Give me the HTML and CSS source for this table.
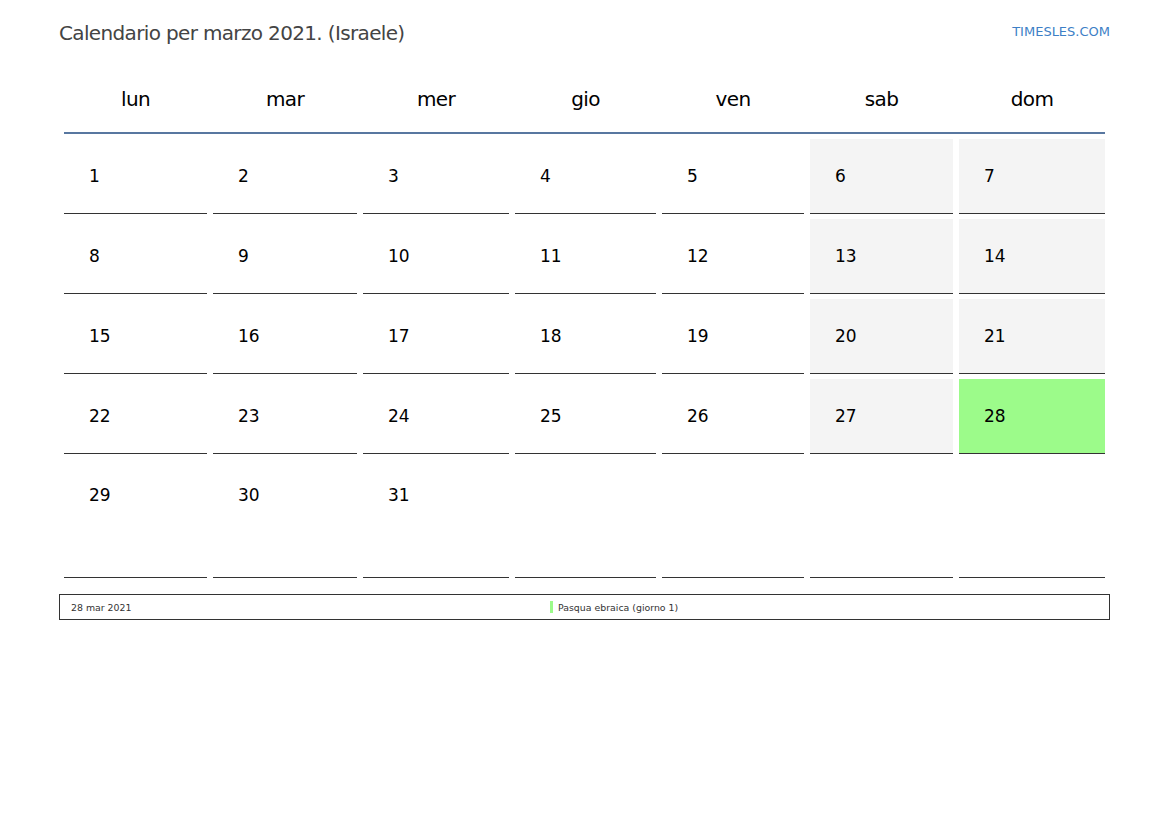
FILE: index.html
```html
<!DOCTYPE html>
<html lang="it">
<head>
<meta charset="utf-8">
<title>Calendario marzo 2021</title>
<link rel="stylesheet" href="styles.css">
</head>
<body>
<div class="page">
  <header class="top">
    <h1 class="title">Calendario per marzo 2021. (Israele)</h1>
    <a class="brand">TIMESLES.COM</a>
  </header>
  <div class="cal">
    <div class="head">
      <div class="hd">lun</div><div class="hd">mar</div><div class="hd">mer</div><div class="hd">gio</div><div class="hd">ven</div><div class="hd">sab</div><div class="hd">dom</div>
    </div>
    <div class="grid">
      <div class="c">1</div><div class="c">2</div><div class="c">3</div><div class="c">4</div><div class="c">5</div><div class="c we">6</div><div class="c we">7</div>
      <div class="c">8</div><div class="c">9</div><div class="c">10</div><div class="c">11</div><div class="c">12</div><div class="c we">13</div><div class="c we">14</div>
      <div class="c">15</div><div class="c">16</div><div class="c">17</div><div class="c">18</div><div class="c">19</div><div class="c we">20</div><div class="c we">21</div>
      <div class="c">22</div><div class="c">23</div><div class="c">24</div><div class="c">25</div><div class="c">26</div><div class="c we">27</div><div class="c hol">28</div>
      <div class="c last">29</div><div class="c last">30</div><div class="c last">31</div><div class="c last"></div><div class="c last"></div><div class="c last"></div><div class="c last"></div>
    </div>
  </div>
  <div class="legend">
    <div class="ldate">28 mar 2021</div>
    <div class="lname"><span class="mark"></span>Pasqua ebraica (giorno 1)</div>
  </div>
</div>
</body>
</html>
```
FILE: styles.css
```css
html, body { margin: 0; padding: 0; background: #fff; }
body { font-family: "DejaVu Sans", sans-serif; color: #000; }
.page { width: 1169px; height: 827px; box-sizing: border-box; padding: 21px 59px 0 59px; }
.top { display: flex; justify-content: space-between; align-items: flex-start; height: 58px; }
.title { margin: 0; font-weight: normal; font-size: 20px; line-height: 24px; color: #444; letter-spacing: -0.65px; }
.brand { font-size: 13px; line-height: 16px; color: #3d7fc6; margin-top: 3px; text-decoration: none; }
.cal { margin: 0 5px; }
.head, .grid { display: grid; grid-template-columns: 143px 144px 146px 141px 142px 143px 146px; column-gap: 6px; }
.head { border-bottom: 2px solid #5877a0; }
.hd { text-align: center; font-size: 20px; line-height: 24px; padding: 8px 0 21px; letter-spacing: -0.6px; }
.grid { row-gap: 5px; margin-top: 5px; }
.c { height: 74px; box-sizing: content-box; border-bottom: 1px solid #333; padding-left: 25px; font-size: 17px; line-height: 74px; }
.c.we { background: #f4f4f4; }
.c.hol { background: #9cfb8a; }
.c.last { height: 118px; line-height: 72px; }
.legend { display: flex; margin-top: 16px; height: 24px; border: 1px solid #333; font-size: 9.4px; color: #333; align-items: center; }
.ldate { width: 479px; padding-left: 11px; flex: none; }
.lname { display: flex; align-items: center; }
.mark { display: inline-block; width: 3px; height: 12px; background: #9cfb8a; margin-right: 5px; }
```
